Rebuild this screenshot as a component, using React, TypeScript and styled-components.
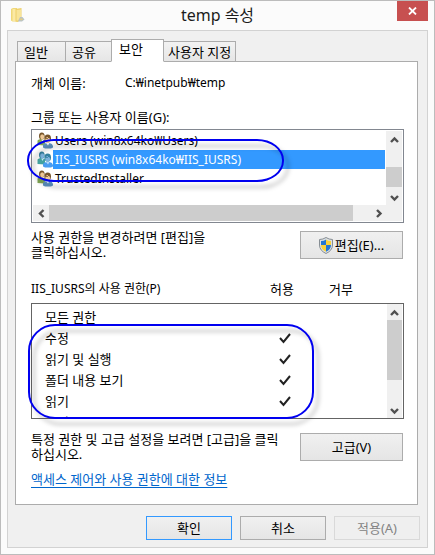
import React, { useState } from "react";
import styled, { createGlobalStyle, css } from "styled-components";

const GlobalStyle = createGlobalStyle`
  *, *::before, *::after { box-sizing: border-box; }
  body {
    margin: 0;
    background: #fbfbfb;
    color: #000;
    font: 13px/20px "Noto Sans", "Noto Sans CJK KR", sans-serif;
  }
  button, input { font: inherit; color: inherit; }
`;

const DialogWindow = styled.main`
  display: flex;
  flex-direction: column;
  min-height: 100vh;
  padding: 0 6px 6px;
  border: 1px solid #bcbcbc;
  background: #fbfbfb;
`;

const TitleBar = styled.header`
  display: grid;
  grid-template-columns: 31px 1fr 31px;
  height: 29px;
  align-items: start;
`;

const TitleIcon = styled.svg`
  width: 16px;
  height: 16px;
  margin: 6px 0 0 3px;
`;

const Title = styled.h1`
  margin: 0;
  color: #1c1c1c;
  font-size: 16px;
  font-weight: 400;
  line-height: 28px;
  text-align: center;
  white-space: nowrap;
`;

const CloseButton = styled.button`
  display: flex;
  align-items: center;
  justify-content: center;
  height: 20px;
  padding: 0;
  border: 0;
  background: #c75050;
`;

const Client = styled.div`
  flex: 1;
  display: flex;
  flex-direction: column;
  padding: 8px 7px 7px;
  border: 1px solid #d2d2d2;
  background: #f0f0f0;
`;

const TabList = styled.div`
  display: flex;
  align-items: flex-end;
  height: 23px;
  margin: 0 0 -1px 2px;
`;

const Tab = styled.button<{ $wide?: boolean }>`
  position: relative;
  height: 21px;
  min-width: 47px;
  margin-right: -1px;
  padding: 0 ${(p) => (p.$wide ? "4px" : "6px")};
  border: 1px solid #acacac;
  background: linear-gradient(#f2f2f2, #e6e6e6);
  line-height: 18px;
  text-align: left;
  white-space: nowrap;

  &:first-child { min-width: 49px; }

  &[aria-selected="true"] {
    z-index: 1;
    height: 23px;
    min-width: 53px;
    padding: 0 7px 3px;
    border-bottom-color: #fff;
    background: #fff;
  }
`;

const Panel = styled.section`
  flex: 1;
  margin-right: 2px;
  padding: 11px 13px 16px 15px;
  border: 1px solid #acacac;
  background: #fff;
`;

const ObjectName = styled.dl`
  display: grid;
  grid-template-columns: 94px 1fr;
  margin: 0;
`;

const Term = styled.dt``;

const Detail = styled.dd`
  margin: 0;
  font-size: 12px;
`;

const FieldLabel = styled.div`
  margin: 14px 0 2px;
`;

const Annotated = styled.div`
  position: relative;
`;

const Highlight = styled.div<{ $kind: "user" | "rights" }>`
  position: absolute;
  z-index: 3;
  border: 2px solid #0000f0;
  filter: drop-shadow(5px 6px 2px rgba(0, 0, 0, 0.28));
  pointer-events: none;
  ${(p) =>
    p.$kind === "user"
      ? css`
          top: 10px;
          left: -4px;
          width: 257px;
          height: 43px;
          border-radius: 27px / 21px;
        `
      : css`
          top: 45px;
          left: -3px;
          width: 286px;
          height: 95px;
          border-radius: 27px;
        `}
`;

const UserBox = styled.div`
  display: grid;
  grid-template-columns: 1fr 16px;
  grid-template-rows: 74px 16px;
  padding: 1px;
  border: 1px solid #828790;
  background: #fff;
`;

const UserList = styled.ul`
  margin: 0;
  padding: 0;
  list-style: none;
  overflow: hidden;
`;

const UserRow = styled.li`
  display: grid;
  grid-template-columns: 16px 1fr;
  height: 19px;
  padding: 0 1px 0 4px;
  line-height: 19px;
  font-size: 12px;
  white-space: nowrap;
`;

const UserName = styled.span<{ $selected: boolean }>`
  padding-left: 2px;
  background: ${(p) => (p.$selected ? "#3399ff" : "transparent")};
  color: ${(p) => (p.$selected ? "#fff" : "#000")};
`;

const ScrollBar = styled.div<{ $horizontal?: boolean }>`
  display: flex;
  flex-direction: ${(p) => (p.$horizontal ? "row" : "column")};
  background: #f0f0f0;
`;

const ScrollArrow = styled.button`
  display: flex;
  flex: 0 0 16px;
  align-items: center;
  justify-content: center;
  padding: 0;
  border: 0;
  background: transparent;
`;

const ScrollTrack = styled.div<{ $before: number; $thumb: number; $after: number; $horizontal?: boolean }>`
  flex: 1;
  display: grid;
  ${(p) =>
    p.$horizontal
      ? css`grid-template-columns: ${p.$before}fr ${p.$thumb}fr ${p.$after}fr;`
      : css`grid-template-rows: ${p.$before}fr ${p.$thumb}fr ${p.$after}fr;`}
`;

const ScrollThumb = styled.div<{ $horizontal?: boolean }>`
  ${(p) => (p.$horizontal ? "grid-column: 2;" : "grid-row: 2;")}
  background: #cdcdcd;
`;

const ScrollCorner = styled.div`
  background: #f0f0f0;
`;

const ActionRow = styled.div<{ $gap: number }>`
  display: grid;
  grid-template-columns: 1fr 103px;
  align-items: center;
  gap: 10px;
  margin: ${(p) => p.$gap}px 1px 0 0;
`;

const Note = styled.p`
  margin: 0;
  line-height: 15px;
  white-space: nowrap;
`;

const PushButton = styled.button<{ $tall?: boolean }>`
  display: flex;
  align-items: center;
  justify-content: center;
  gap: 2px;
  height: ${(p) => (p.$tall ? 28 : 24)}px;
  padding: 0;
  border: 1px solid #acacac;
  background: linear-gradient(#f0f0f0, #e5e5e5);
  line-height: 20px;
  white-space: nowrap;

  &[type="submit"] { border-color: #3399ff; }

  &:disabled {
    border-color: #d9d9d9;
    background: #efefef;
    color: #838383;
  }
`;

const Rights = styled.div`
  display: grid;
  grid-template-columns: 1fr 17px;
  grid-template-rows: 25px 1fr 1px;
  margin-top: 19px;

  > ${ScrollBar} {
    z-index: 1;
    grid-area: 2 / 2;
    margin-right: 2px;
  }
`;

const RightsTable = styled.table`
  grid-area: 1 / 1 / 4 / 3;
  display: block;
`;

const RightsHead = styled.thead`
  display: block;
  height: 24px;
`;

const RightsBody = styled.tbody`
  display: block;
  height: 116px;
  padding: 3px 0 0;
  border: 1px solid #646464;
  overflow: hidden;
`;

const RightsRow = styled.tr`
  display: grid;
  grid-template-columns: 1fr 60px 58px 34px;
  height: 21px;
`;

const HeadCell = styled.th<{ $center?: boolean }>`
  padding: 0;
  font-size: ${(p) => (p.$center ? 13 : 12)}px;
  font-weight: 400;
  text-align: ${(p) => (p.$center ? "center" : "left")};
  white-space: nowrap;
`;

const RightName = styled.th`
  padding: 0 0 0 13px;
  font-weight: 400;
  text-align: left;
  white-space: nowrap;
`;

const Cell = styled.td`
  display: grid;
  place-items: center;
  padding: 0 0 2px 8px;

  > * { grid-area: 1 / 1; }
`;

const TickInput = styled.input`
  appearance: none;
  width: 13px;
  height: 13px;
  margin: 0;
`;

const TickMark = styled.svg`
  width: 14px;
  height: 14px;
  pointer-events: none;
`;

const HelpLink = styled.a`
  display: table;
  margin-top: 8px;
  color: #0066cc;
  line-height: 18px;
  text-decoration: underline;
  text-underline-offset: 3px;
  white-space: nowrap;
`;

const Footer = styled.footer`
  display: grid;
  grid-template-columns: repeat(3, 86px);
  justify-content: end;
  gap: 8px;
  margin-top: 11px;
`;

const ARROWS = {
  up: "M1 7 4.500 3.500 8 7",
  down: "M1 3 4.500 6.500 8 3",
  left: "M6.500 1 3 4.500 6.500 8",
  right: "M3 1 6.500 4.500 3 8",
};

function Arrow({ to, label }: { to: keyof typeof ARROWS; label: string }) {
  return (
    <ScrollArrow type="button" aria-label={label}>
      <svg width="9" height="9" viewBox="0 0 9 9" fill="none" stroke="#505050" strokeWidth="2.4" aria-hidden="true">
        <path d={ARROWS[to]} />
      </svg>
    </ScrollArrow>
  );
}

function FolderIcon() {
  return (
    <TitleIcon viewBox="0 0 16 16" aria-hidden="true">
      <path d="M1 2 3 1h4v13.500H2.500L1 13.500z" fill="#f0d878" />
      <path d="M2.500 2h4v12h-4z" fill="#fbe9a4" />
      <path d="M5.500 2 11.500 1v10.500L8 15l-2.500-.5z" fill="#edcf68" />
      <path d="M6.500 3l4.500-.5V10l-3 3.500H6.500z" fill="#f8e498" />
      <path d="M10 10h2.500l2 2.500-2.500 2H8z" fill="#b9c3c6" />
      <path d="m9.500 12 2-1 1.500 1.500-2 1z" fill="#e3cd86" />
    </TitleIcon>
  );
}

function UsersIcon({ selected }: { selected: boolean }) {
  const hair = selected ? "#33809f" : "#76542a";
  const face = selected ? "#7db2dc" : "#efc896";
  const green = selected ? "#43a2a0" : "#81a855";
  const blue = selected ? "#4b9df0" : "#5c91c1";
  return (
    <svg width="16" height="19" viewBox="0 0 16 19" aria-hidden="true">
      <path d="M.5 14V9.500Q2 7.500 4.500 8L8 9v5.500z" fill={green} />
      <path d="m4 8 1.500 3L7 8z" fill={selected ? "#c4e4f1" : "#f8f5de"} />
      <ellipse cx="4.800" cy="5" rx="2.800" ry="3.600" fill={hair} />
      <ellipse cx="5.200" cy="5.800" rx="2" ry="2.600" fill={face} />
      <path d="M6 16.500V14q1-2 4-2h2.500q3 .5 3.500 3v1.500l-2 1H8z" fill={blue} />
      <path d="m9 12 2 2.500 1.500-2.500z" fill={selected ? "#b6dafa" : "#f2f7fb"} />
      <ellipse cx="10.700" cy="7.500" rx="3.300" ry="4" fill={hair} />
      <ellipse cx="10.700" cy="9" rx="2.400" ry="3" fill={face} />
      <path d="M8 7q3 1.500 4-1l1.500 2" stroke={hair} fill="none" />
    </svg>
  );
}

function ShieldIcon() {
  return (
    <svg width="14" height="17" viewBox="0 0 14 17" aria-hidden="true">
      <path d="M7 .5Q10 2.500 13.500 2.500V8q0 5.500-6.500 8.500Q.5 13.500.5 8V2.500Q4 2.500 7 .5z" fill="#dce1e5" stroke="#868d93" />
      <path d="M7 2.500V8H2V4q3 0 5-1.500z" fill="#2477d4" />
      <path d="M7 2.500V8h5V4Q9 4 7 2.500z" fill="#fad23b" />
      <path d="M2 8h5v6.700Q2 12.500 2 8z" fill="#fad23b" />
      <path d="M12 8H7v6.700q5-2.200 5-6.700z" fill="#2477d4" />
    </svg>
  );
}

const TABS = ["일반", "공유", "보안", "사용자 지정"];
const USERS = ["Users (win8x64ko₩Users)", "IIS_IUSRS (win8x64ko₩IIS_IUSRS)", "TrustedInstaller"];
const RIGHTS = [
  { name: "모든 권한", allow: false },
  { name: "수정", allow: true },
  { name: "읽기 및 실행", allow: true },
  { name: "폴더 내용 보기", allow: true },
  { name: "읽기", allow: true },
  { name: "쓰기", allow: true },
];

export default function App() {
  const [tab, setTab] = useState(2);
  const [user, setUser] = useState(1);

  return (
    <>
      <GlobalStyle />
      <DialogWindow>
        <TitleBar>
          <FolderIcon />
          <Title>temp 속성</Title>
          <CloseButton type="button" aria-label="닫기">
            <svg width="9" height="8" viewBox="0 0 9 8" fill="none" stroke="#fff" strokeWidth="1.8" aria-hidden="true">
              <path d="m1 .5 7 7M8 .5l-7 7" />
            </svg>
          </CloseButton>
        </TitleBar>
        <Client>
          <TabList role="tablist">
            {TABS.map((name, i) => (
              <Tab
                key={name}
                type="button"
                role="tab"
                aria-selected={i === tab}
                $wide={name.length > 2}
                onClick={() => setTab(i)}
              >
                {name}
              </Tab>
            ))}
          </TabList>
          <Panel role="tabpanel" aria-label={TABS[tab]}>
            <ObjectName>
              <Term>개체 이름:</Term>
              <Detail>C:₩inetpub₩temp</Detail>
            </ObjectName>

            <FieldLabel id="users-label">그룹 또는 사용자 이름(G):</FieldLabel>
            <Annotated>
              <UserBox>
                <UserList role="listbox" aria-labelledby="users-label">
                  {USERS.map((name, i) => (
                    <UserRow key={name} role="option" aria-selected={i === user} onClick={() => setUser(i)}>
                      <UsersIcon selected={i === user} />
                      <UserName $selected={i === user}>{name}</UserName>
                    </UserRow>
                  ))}
                </UserList>
                <ScrollBar>
                  <Arrow to="up" label="위로" />
                  <ScrollTrack $before={20} $thumb={20} $after={2}>
                    <ScrollThumb />
                  </ScrollTrack>
                  <Arrow to="down" label="아래로" />
                </ScrollBar>
                <ScrollBar $horizontal>
                  <Arrow to="left" label="왼쪽으로" />
                  <ScrollTrack $horizontal $before={0} $thumb={304} $after={17}>
                    <ScrollThumb $horizontal />
                  </ScrollTrack>
                  <Arrow to="right" label="오른쪽으로" />
                </ScrollBar>
                <ScrollCorner />
              </UserBox>
              <Highlight $kind="user" />
            </Annotated>

            <ActionRow $gap={7}>
              <Note>
                사용 권한을 변경하려면 [편집]을
                <br />
                클릭하십시오.
              </Note>
              <PushButton type="button" $tall>
                <ShieldIcon />
                편집(E)...
              </PushButton>
            </ActionRow>

            <Annotated>
              <Rights>
                <RightsTable>
                  <RightsHead>
                    <RightsRow>
                      <HeadCell scope="col">IIS_IUSRS의 사용 권한(P)</HeadCell>
                      <HeadCell scope="col" $center>허용</HeadCell>
                      <HeadCell scope="col" $center>거부</HeadCell>
                    </RightsRow>
                  </RightsHead>
                  <RightsBody>
                    {RIGHTS.map(({ name, allow }) => (
                      <RightsRow key={name}>
                        <RightName scope="row">{name}</RightName>
                        <Cell>
                          <TickInput type="checkbox" aria-label={`${name} 허용`} checked={allow} readOnly />
                          {allow && (
                            <TickMark viewBox="0 0 14 14" aria-hidden="true">
                              <path d="m2 7 3.500 4L12 3" fill="none" stroke="#222" strokeWidth="2" />
                            </TickMark>
                          )}
                        </Cell>
                        <Cell>
                          <TickInput type="checkbox" aria-label={`${name} 거부`} checked={false} readOnly />
                        </Cell>
                      </RightsRow>
                    ))}
                  </RightsBody>
                </RightsTable>
                <ScrollBar>
                  <Arrow to="up" label="위로" />
                  <ScrollTrack $before={0} $thumb={60} $after={22}>
                    <ScrollThumb />
                  </ScrollTrack>
                  <Arrow to="down" label="아래로" />
                </ScrollBar>
              </Rights>
              <Highlight $kind="rights" />
            </Annotated>

            <ActionRow $gap={13}>
              <Note>
                특정 권한 및 고급 설정을 보려면 [고급]을 클릭
                <br />
                하십시오.
              </Note>
              <PushButton type="button" $tall>고급(V)</PushButton>
            </ActionRow>

            <HelpLink href="#access-control">액세스 제어와 사용 권한에 대한 정보</HelpLink>
          </Panel>
          <Footer>
            <PushButton type="submit">확인</PushButton>
            <PushButton type="button">취소</PushButton>
            <PushButton type="button" disabled>적용(A)</PushButton>
          </Footer>
        </Client>
      </DialogWindow>
    </>
  );
}
